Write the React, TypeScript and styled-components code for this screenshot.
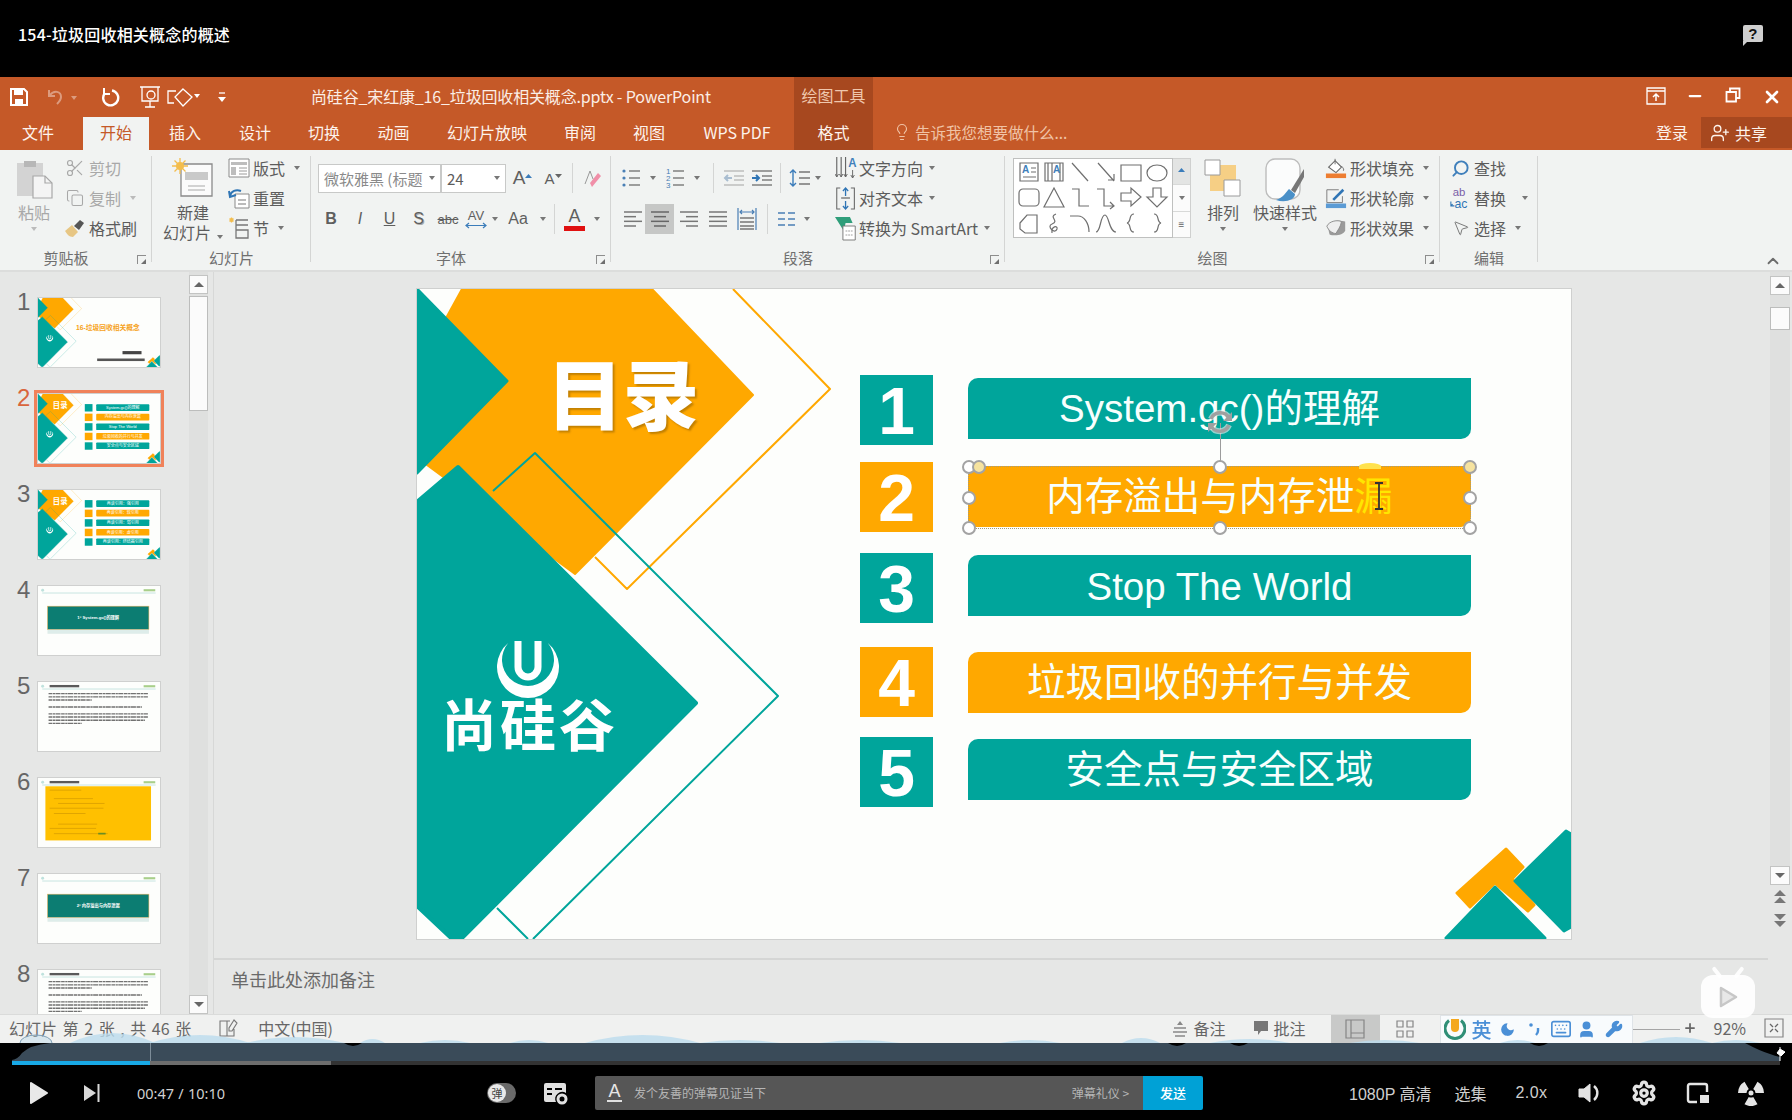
import React from 'react';
import styled, { createGlobalStyle } from 'styled-components';
import {
  ChevronUp, Copy, Keyboard, Lightbulb, Minus, Moon, MousePointer2, Plus, Scissors, Search,
  Settings, User, UserPlus, Wrench, X,
} from 'lucide-react';

const UI_FONT = '"Noto Sans CJK SC", "Noto Sans", sans-serif';
const SLIDE_FONT = '"Liberation Sans", "Noto Sans CJK SC", sans-serif';
const TEAL = '#00a59b';
const AMBER = '#ffa800';
const RUST = '#c55928';
const RUST_DARK = '#a7481f';
const INK = '#5c5c5c';
const FADED = '#a8a8a8';

const GlobalStyle = createGlobalStyle`
  html, body { margin: 0; padding: 0; background: #000; }
  * { box-sizing: border-box; }
`;

/* ---------- drawings ---------- */

const Caret = styled.span<{ $color?: string; $ml?: number }>`
  display: inline-block;
  width: 0;
  height: 0;
  margin-left: ${({ $ml }) => $ml ?? 6}px;
  border-left: 3.5px solid transparent;
  border-right: 3.5px solid transparent;
  border-top: 4px solid ${({ $color }) => $color || '#777'};
`;

const Ico = ({ w = 22, h = 22, children }: { w?: number; h?: number; children: React.ReactNode }) => (
  <svg width={w} height={h} viewBox={`0 0 ${w} ${h}`} fill="none" style={{ display: 'block' }}>
    {children}
  </svg>
);

const LinesIcon = ({ rows, color = '#777' }: { rows: number[][]; color?: string }) => (
  <Ico w={20} h={20}>
    {rows.map(([x1, x2], i) => (
      <path key={i} d={`M${x1} ${3 + i * (14 / (rows.length - 1))}H${x2}`} stroke={color} strokeWidth="1.5" />
    ))}
  </Ico>
);

const ListIcon = ({ numbered }: { numbered?: boolean }) => (
  <Ico w={20} h={20}>
    {[3, 10, 17].map((y, i) => (
      <g key={y}>
        {numbered ? (
          <text x="1" y={y + 3} fontSize="8" fontFamily="Liberation Sans" fill="#4a7fb5">{i + 1}</text>
        ) : (
          <circle cx="3" cy={y} r="1.6" fill="#4a7fb5" />
        )}
        <path d={`M8 ${y}H19`} stroke="#777" strokeWidth="1.4" />
      </g>
    ))}
  </Ico>
);

const IndentIcon = ({ faded }: { faded?: boolean }) => (
  <Ico w={24} h={20}>
    {[3, 8, 12, 17].map((y) => (
      <path key={y} d={`M${y === 3 || y === 17 ? 2 : 12} ${y}H22`} stroke={faded ? '#b9b9b9' : '#777'} strokeWidth="1.4" />
    ))}
    <path d={faded ? 'M10 10H3M6 7l-3 3 3 3' : 'M2 10H9M6 7l3 3-3 3'} stroke={faded ? '#a9bdd0' : '#2f75b5'} strokeWidth="2" />
  </Ico>
);

const LineSpacingIcon = () => (
  <Ico w={24} h={22}>
    <path d="M5 3v16M2 6l3-3 3 3M2 16l3 3 3-3" stroke="#3b7cba" strokeWidth="1.4" />
    <path d="M11 5H22M11 11H22M11 17H22" stroke="#777" strokeWidth="1.4" />
  </Ico>
);

const DistributedIcon = () => (
  <Ico w={22} h={24}>
    <path d="M2 1v22M20 1v22" stroke="#4a7fb5" strokeWidth="1.2" />
    <path d="M4 5H18M6 3L4 5l2 2M16 3l2 2-2 2" stroke="#4a7fb5" strokeWidth="1.2" />
    <path d="M4 11H18M4 15H18M4 19H18M4 22H18" stroke="#777" strokeWidth="1.4" />
  </Ico>
);

const ColumnsIcon = () => (
  <Ico w={20} h={18}>
    <path d="M1 3H8M1 9H8M1 15H8M11 3H18M11 9H18M11 15H18" stroke="#4a7fb5" strokeWidth="1.5" />
  </Ico>
);

const PasteIcon = () => (
  <Ico w={38} h={42}>
    <path d="M2 5H28V38H2z" fill="#d3d3d3" />
    <path d="M9 3h12v6H9z" fill="#b7b7b7" />
    <path d="M18 18h12l7 7v15H18z" fill="#f4f4f4" stroke="#a8a8a8" strokeWidth="1.2" />
    <path d="M30 18v7h7" stroke="#a8a8a8" strokeWidth="1.2" />
  </Ico>
);

const BrushIcon = () => (
  <Ico w={22} h={20}>
    <path d="M1 13l7-6 6 7-5 5c-4 0-6-3-8-6z" fill="#e7c684" />
    <path d="M10 8l6-6 4 3-5 7z" fill="#555" />
  </Ico>
);

const NewSlideIcon = () => (
  <Ico w={42} h={40}>
    <path d="M9 6H40V38H9z" fill="#fbfbfb" stroke="#8a8a8a" strokeWidth="1.3" />
    <path d="M13 14H36V22H13z" fill="#c9c9c9" />
    <path d="M16 28H33M16 32H33" stroke="#a9a9a9" strokeWidth="1" />
    <circle cx="8" cy="8" r="4" fill="#f3bd4d" />
    <path d="M8 0v16M0 8h16M2.5 2.5l11 11M13.5 2.5l-11 11" stroke="#f3bd4d" strokeWidth="1.3" />
  </Ico>
);

const LayoutIcon = () => (
  <Ico w={22} h={22}>
    <path d="M1 2H21V20H1z" fill="#fff" stroke="#8a8a8a" />
    <path d="M3 5H19V8H3zM3 10H8V18H3z" fill="#bdbdbd" />
    <path d="M11 11H19M11 14H19M11 17H19" stroke="#9a9a9a" />
  </Ico>
);

const ResetIcon = () => (
  <Ico w={22} h={22}>
    <path d="M7 7H21V21H7z" fill="#fff" stroke="#8a8a8a" />
    <path d="M10 13H18M10 17H18" stroke="#a5a5a5" strokeWidth="1.4" />
    <path d="M2 9C3 4 8 2 13 4M1 4l1 6 6-2" stroke="#2f75b5" strokeWidth="2" />
  </Ico>
);

const SectionIcon = () => (
  <Ico w={22} h={24}>
    <path d="M8 4H20M8 4V22H20V14H8M8 9H20" stroke="#777" strokeWidth="1.3" />
    <path d="M1 4H6M3.5 1.5V6.5M1.7 2.2l3.6 3.6M5.3 2.2L1.7 5.800" stroke="#f3bd4d" strokeWidth="1.1" />
  </Ico>
);

const TextDirectionIcon = () => (
  <Ico w={24} h={26}>
    <g transform="scale(0.88 1)">
      <path d="M2 2v20M7 2v20M12 2v20" stroke="#666" strokeWidth="1.3" />
      <path d="M0 19l2 3 2-3M5 19l2 3 2-3M10 19l2 3 2-3" stroke="#666" />
      <text x="15" y="12" fontSize="13" fontWeight="700" fontFamily="Liberation Sans" fill="#3f7fbb">A</text>
      <path d="M20 15v8M18 20l2 3 2-3" stroke="#666" />
    </g>
  </Ico>
);

const AlignTextIcon = () => (
  <Ico w={24} h={26}>
    <g transform="scale(0.88 1)">
      <path d="M6 3H2V24H6M18 3H22V24H18" stroke="#666" strokeWidth="1.2" />
      <path d="M12 3v8M9 6l3-3 3 3M12 16v8M9 21l3 3 3-3" stroke="#2f75b5" strokeWidth="1.5" />
      <path d="M7 13H17" stroke="#777" strokeWidth="1.4" />
    </g>
  </Ico>
);

const SmartArtIcon = () => (
  <Ico w={24} h={26}>
    <g transform="scale(0.88 1)">
      <path d="M0 2H17L20 8H12L10 16z" fill="#2f9e7a" />
      <path d="M9 11H23V25H9z" fill="#fff" stroke="#777" />
      <path d="M12 16H20M12 20H20" stroke="#999" strokeDasharray="2 1" />
    </g>
  </Ico>
);

const FillIcon = () => (
  <Ico w={24} h={24}>
    <path d="M4 11l7-7 7 7-6 6z" fill="#fff" stroke="#666" strokeWidth="1.2" />
    <path d="M11 2v6M18 10c2 2 3 4 2 5" stroke="#666" />
    <path d="M1 18H23V23H1z" fill="#ed7d31" />
  </Ico>
);

const OutlineIcon = () => (
  <Ico w={24} h={24}>
    <path d="M2 3H15M2 3V17H19V10" stroke="#777" />
    <path d="M8 13L19 2l2 2-11 11z" fill="#2f75b5" />
    <path d="M1 18H23V23H1z" fill="#5b9bd5" />
  </Ico>
);

const EffectIcon = () => (
  <Ico w={24} h={22}>
    <path d="M3 10c3-7 13-8 19-6v10c-2 5-12 6-17 4z" fill="#9a9a9a" />
    <path d="M2 9c3-6 12-7 16-5-1 6-4 9-6 13-4 0-8-3-10-8z" fill="#eee" stroke="#888" />
  </Ico>
);

const ReplaceIcon = () => (
  <Ico w={24} h={26}>
    <text x="3" y="11" fontSize="13" fontFamily="Liberation Sans" fill="#7a5ea8">ab</text>
    <text x="5" y="24" fontSize="14" fontFamily="Liberation Sans" fill="#2f75b5">ac</text>
    <path d="M1 17v5h4M3 20l-2 2" stroke="#2f75b5" strokeWidth="1.2" />
  </Ico>
);

const ArrangeIcon = () => (
  <Ico w={38} h={40}>
    <path d="M6 7H32V33H6z" fill="#f6cf85" />
    <path d="M1 2H16V17H1z" fill="#fff" stroke="#9a9a9a" />
    <path d="M20 22H36V38H20z" fill="#fff" stroke="#9a9a9a" />
  </Ico>
);

const QuickStyleIcon = () => (
  <Ico w={40} h={46}>
    <rect x="1" y="1" width="34" height="40" rx="9" fill="#fbfcfc" stroke="#bdbdbd" strokeWidth="1.4" />
    <path d="M39 11L26 32l4 3 9-16z" fill="#777" />
    <path d="M24 31c-3 3-6 9-13 11 9 3 19 0 19-6z" fill="#4a90c8" />
  </Ico>
);

const TinyTriangle = ({ down }: { down?: boolean }) => (
  <Ico w={7} h={14}>
    <path d={down ? 'M0 3H7L3.5 7z' : 'M0 7H7L3.5 3z'} fill={down ? '#666' : '#3b7cba'} />
  </Ico>
);

const sector = (angle: number) => {
  const pt = (r: number, a: number) => {
    const rad = (a * Math.PI) / 180;
    return `${(13 + r * Math.cos(rad)).toFixed(2)} ${(13 + r * Math.sin(rad)).toFixed(2)}`;
  };
  return `M${pt(4.5, angle - 30)}L${pt(13, angle - 30)}A13 13 0 0 1 ${pt(13, angle + 30)}L${pt(4.5, angle + 30)}A4.5 4.5 0 0 0 ${pt(4.5, angle - 30)}z`;
};

const PlayBadgeGlyph = styled.svg`
  width: 20px;
  height: 24px;
  display: block;
`;

const galleryShapes = [
  'M3 3H21V21H3z M14 8H19 M14 12H19 M6 17H19',
  'M3 3H21V21H3z M6 3V21 M10 3V21 M18 3V21',
  'M4 3L20 21',
  'M4 3L20 21 M14 20H20V14',
  'M2 5H22V21H2z',
  'M2 13a10 8 0 1 0 20 0a10 8 0 1 0 -20 0',
  'M6 4H18a4 4 0 0 1 4 4V17a4 4 0 0 1 -4 4H6a4 4 0 0 1 -4 -4V8a4 4 0 0 1 4 -4z',
  'M12 3L22 22H2z',
  'M4 4H11V21H21',
  'M3 4H10V21H20 M16 17L20 21L16 24',
  'M2 8H12V3L22 12L12 21V16H2z',
  'M8 3H16V12H22L12 22L2 12H8z',
  'M3 12L10 4H20V22H8L3 18z',
  'M14 3C6 6 18 10 10 13C4 15 13 24 15 18C16 14 9 15 10 22',
  'M2 5H10C16 5 21 12 21 21',
  'M2 21C7 21 6 4 11 4C15 4 15 21 22 21',
  'M15 3C9 3 13 11 8 12C13 13 9 21 15 21',
  'M9 3C15 3 11 11 16 12C11 13 15 21 9 21',
];

const MiniDecor = () => (
  <g strokeLinejoin="round">
    <path d="M316 0L413 100L210 300L178 268" fill="none" stroke={AMBER} strokeWidth="2" />
    <path d="M45 0H235L336 106L158 285L10 176L-10 100z" fill={AMBER} stroke={AMBER} strokeWidth="2" />
    <path d="M0 0L90 92L0 184z" fill={TEAL} stroke={TEAL} strokeWidth="3" />
    <path d="M0 213L41 178L279 414L46 648H33L0 617z" fill={TEAL} stroke={TEAL} strokeWidth="4" />
    <path d="M76 202L118 164L361 407L116 650M80 619L111 650" fill="none" stroke={TEAL} strokeWidth="2" />
  </g>
);

const CornerDecor = () => (
  <g strokeLinejoin="round">
    <path d="M1089 560L1106 578L1095 590L1117 616L1111 622L1078 594L1053 618L1040 604z" fill={AMBER} stroke={AMBER} strokeWidth="3" />
    <path d="M1149 542L1154 545V638L1147 642L1098 592z" fill={TEAL} stroke={TEAL} strokeWidth="3" />
    <path d="M1078 598L1029 649H1128z" fill={TEAL} stroke={TEAL} strokeWidth="3" />
  </g>
);

const ULogo = ({ cx, cy }: { cx: number; cy: number }) => (
  <g transform={`translate(${cx} ${cy})`}>
    <path d="M-19.8 -23.9A31 31 0 1 0 19.8 -23.9A26 26 0 1 1 -19.8 -23.9z" fill="#fff" />
    <path d="M-10 -26V0A10 10 0 0 0 10 0V-26" fill="none" stroke="#fff" strokeWidth="7" />
  </g>
);

/* ---------- thumbnails ---------- */

const tocColors = [TEAL, AMBER, TEAL, AMBER, TEAL];

const MiniToc = ({ title, labels }: { title: string; labels: string[] }) => (
  <>
    <MiniDecor />
    <ULogo cx={111} cy={376} />
    <text x="140" y="135" fontSize="70" fontWeight="700" fontFamily={UI_FONT} fill="#fff">{title}</text>
    {labels.map((label, i) => (
      <g key={label}>
        <rect x="443" y={95 + i * 90} width="73" height="70" fill={tocColors[i]} />
        <rect x="551" y={97 + i * 90} width="503" height="62" rx="8" fill={tocColors[i]} />
        <text x="802" y={140 + i * 90} textAnchor="middle" fontSize="38" fontFamily={SLIDE_FONT} fill="#fff">{label}</text>
      </g>
    ))}
    <CornerDecor />
  </>
);

const MiniHeader = ({ title }: { title?: string }) => (
  <>
    <rect x="40" y="62" width="1074" height="8" fill="#bfe2dd" />
    <circle cx="44" cy="40" r="14" fill="#bfe2dd" />
    <rect x="1000" y="30" width="110" height="20" fill="#a8cf8a" />
    {title && <rect x="110" y="28" width="280" height="22" fill="#5a5a5a" />}
  </>
);

const MiniParagraphs = () => (
  <>
    {[
      [110, 990], [140, 990], [170, 430], [235, 930], [300, 990], [330, 990], [360, 960], [390, 330],
    ].map(([y, w]) => (
      <line key={y} x1="100" x2={100 + w * 0.95} y1={y} y2={y} stroke="#3d3d3d" strokeWidth="13" strokeDasharray="34 5 22 4 48 6" opacity="0.72" />
    ))}
  </>
);

const MiniSection = ({ title }: { title: string }) => (
  <>
    <MiniHeader />
    <rect x="90" y="190" width="960" height="220" fill="#0c7d72" stroke="#f3b35a" strokeWidth="5" />
    <rect x="90" y="410" width="960" height="40" fill="#bfdcd8" opacity="0.5" />
    <text x="570" y="312" textAnchor="middle" fontSize="40" fontFamily={SLIDE_FONT} fontWeight="700" fill="#fff">{title}</text>
  </>
);

const thumbs: { n: number; body: React.ReactNode }[] = [
  {
    n: 1,
    body: (
      <>
        <MiniDecor />
        <ULogo cx={111} cy={376} />
        <text x="360" y="305" fontSize="64" fontWeight="700" fontFamily={SLIDE_FONT} fill="#f6a21a">16-垃圾回收相关概念</text>
        <rect x="800" y="500" width="180" height="30" fill="#444" />
        <rect x="560" y="570" width="450" height="24" fill="#555" />
        <CornerDecor />
      </>
    ),
  },
  { n: 2, body: <MiniToc title="目录" labels={['System.gc()的理解', '内存溢出与内存泄漏', 'Stop The World', '垃圾回收的并行与并发', '安全点与安全区域']} /> },
  { n: 3, body: <MiniToc title="目录" labels={['再谈引用：强引用', '再谈引用：软引用', '再谈引用：弱引用', '再谈引用：虚引用', '再谈引用：终结器引用']} /> },
  { n: 4, body: <MiniSection title="1° System.gc()的理解" /> },
  { n: 5, body: <><MiniHeader title="System.gc()的理解" /><MiniParagraphs /></> },
  {
    n: 6,
    body: (
      <>
        <MiniHeader title="System.gc()的理解" />
        <rect x="70" y="78" width="1000" height="510" fill="#ffc000" />
        {[110, 190, 235, 280, 330, 430, 470, 520].map((y, i) => (
          <rect key={y} x={110 + (i % 3) * 40} y={y} width={300 + (i % 4) * 70} height="9" fill="#dfa400" />
        ))}
        <rect x="570" y="516" width="70" height="16" fill="#6b8e23" />
      </>
    ),
  },
  { n: 7, body: <MiniSection title="2° 内存溢出与内存泄漏" /> },
  { n: 8, body: <><MiniHeader title="内存溢出（OOM）" /><MiniParagraphs /></> },
];

/* ---------- page frame ---------- */

const Page = styled.div`
  width: 1792px;
  height: 1120px;
  background: #000;
  display: flex;
  flex-direction: column;
  overflow: hidden;
  font-family: ${UI_FONT};
`;

const VideoHeader = styled.header`
  height: 77px;
  flex: none;
  padding: 0 28px 10px 18px;
  display: flex;
  align-items: center;
  justify-content: space-between;
  color: #fff;
  font-size: 16px;
  font-weight: 500;
  letter-spacing: 0.2px;
`;

const HelpBubble = styled.div`
  position: relative;
  width: 20px;
  height: 17px;
  margin-right: 1px;
  background: #cfcfcf;
  border-radius: 2px;
  color: #111;
  font: 700 15px/17px "Liberation Sans", sans-serif;
  text-align: center;
  &::after {
    content: '';
    position: absolute;
    left: 0;
    bottom: -4px;
    border-top: 5px solid #cfcfcf;
    border-right: 5px solid transparent;
  }
`;

const Frame = styled.main`
  flex: 1;
  min-height: 0;
  display: flex;
  flex-direction: column;
  background: #e6e7e6;
  filter: blur(0.5px);
`;

const TitleBar = styled.div`
  height: 40px;
  flex: none;
  position: relative;
  background: ${RUST};
  display: flex;
  align-items: center;
  color: #fbeee6;
`;

const QuickTool = styled.span<{ $w: number; $muted?: boolean }>`
  width: ${({ $w }) => $w}px;
  display: flex;
  justify-content: center;
  opacity: ${({ $muted }) => ($muted ? 0.4 : 1)};
`;

const DocTitle = styled.div`
  position: absolute;
  left: 311px;
  top: 8px;
  font-size: 16px;
  line-height: 22px;
  letter-spacing: -0.16px;
  white-space: nowrap;
`;

const WindowButtons = styled.div`
  margin-left: auto;
  display: flex;
  padding-right: 1px;
`;

const WindowButton = styled.span`
  width: 38.5px;
  display: flex;
  justify-content: center;
`;

const ContextTab = styled.div`
  position: absolute;
  left: 794px;
  top: 0;
  width: 79px;
  height: 40px;
  background: ${RUST_DARK};
  color: #efc7ad;
  font-size: 16px;
  line-height: 37px;
  text-align: center;
`;

const TabBar = styled.nav`
  height: 33px;
  flex: none;
  background: ${RUST};
  display: flex;
  align-items: stretch;
  color: #fdf3ec;
  font-size: 16px;
`;

const Tab = styled.div<{ $w: number; $ml?: number; $pr?: number; $active?: boolean; $context?: boolean }>`
  width: ${({ $w }) => $w}px;
  margin-left: ${({ $ml }) => $ml || 0}px;
  flex: none;
  padding: 0 ${({ $pr }) => $pr || 0}px 3px 0;
  display: flex;
  align-items: center;
  justify-content: center;
  white-space: nowrap;
  background: ${({ $active, $context }) => ($active ? '#f1f3f2' : $context ? RUST_DARK : 'transparent')};
  color: ${({ $active }) => ($active ? RUST : 'inherit')};
`;

const TellMe = styled.div`
  margin-left: 20px;
  padding-bottom: 3px;
  display: flex;
  align-items: center;
  gap: 4px;
  color: #f0c3a6;
  font-size: 15.5px;
`;

const SignIn = styled.div`
  margin-left: auto;
  padding: 0 13px 3px 0;
  display: flex;
  align-items: center;
  color: #fdf3ec;
`;

const ShareBox = styled.div`
  width: 91px;
  margin-bottom: 2px;
  padding-left: 9px;
  background: ${RUST_DARK};
  display: flex;
  align-items: center;
  gap: 5px;
`;

/* ---------- ribbon ---------- */

const Ribbon = styled.section`
  height: 122px;
  flex: none;
  position: relative;
  display: flex;
  background: #f1f3f2;
  border-bottom: 2px solid #dcdddc;
  padding-bottom: 2px;
`;

const RibbonGroup = styled.div<{ $w: number }>`
  width: ${({ $w }) => $w}px;
  flex: none;
  position: relative;
  display: flex;
  flex-direction: column;
  &::after {
    content: '';
    position: absolute;
    right: 0;
    top: 6px;
    bottom: 6px;
    width: 1px;
    background: #d4d5d4;
  }
`;

const GroupBody = styled.div<{ $pad: number }>`
  height: 97px;
  flex: none;
  padding-left: ${({ $pad }) => $pad}px;
  display: flex;
  color: ${INK};
  font-size: 16px;
`;

const GroupLabel = styled.div<{ $offset?: boolean }>`
  flex: 1;
  padding: 0 ${({ $offset }) => ($offset ? 20 : 0)}px 3px 0;
  display: flex;
  align-items: center;
  justify-content: center;
  color: #6f6f6f;
  font-size: 15px;
`;

const Launcher = styled.span`
  position: absolute;
  right: 6px;
  bottom: 4px;
  width: 9px;
  height: 9px;
  border-left: 1px solid #8d8d8d;
  border-top: 1px solid #8d8d8d;
  &::after {
    content: '';
    position: absolute;
    right: 0;
    bottom: 0;
    border-bottom: 5px solid #6f6f6f;
    border-left: 5px solid transparent;
  }
`;

const LargeCommand = styled.div<{ $w: number; $ml?: number; $muted?: boolean }>`
  width: ${({ $w }) => $w}px;
  margin-left: ${({ $ml }) => $ml || 0}px;
  flex: none;
  display: flex;
  flex-direction: column;
  align-items: center;
  color: ${({ $muted }) => ($muted ? FADED : INK)};
  line-height: 20px;
  white-space: nowrap;
`;

const LargeIcon = styled.div`
  height: 52px;
  padding-top: 8px;
  display: flex;
  align-items: flex-start;
`;

const CommandColumn = styled.div<{ $ml?: number }>`
  margin-left: ${({ $ml }) => $ml || 0}px;
  padding-top: 3px;
  flex: none;
  display: flex;
  flex-direction: column;
`;

const SmallCommand = styled.div<{ $gap?: number; $muted?: boolean }>`
  height: 30px;
  display: flex;
  align-items: center;
  gap: ${({ $gap }) => $gap ?? 3}px;
  white-space: nowrap;
  color: ${({ $muted }) => ($muted ? FADED : INK)};
`;

const CommandIcon = styled.span<{ $w: number }>`
  width: ${({ $w }) => $w}px;
  flex: none;
  display: flex;
  justify-content: center;
`;

const MirroredIcon = styled.span`
  display: flex;
  transform: scaleX(-1);
`;

const CaretLine = styled.div`
  height: 14px;
  display: flex;
  align-items: center;
  justify-content: center;
  & > span { margin-left: 0; }
`;

const ToolRows = styled.div<{ $w: number }>`
  width: ${({ $w }) => $w}px;
  flex: none;
  padding-top: 13px;
  display: flex;
  flex-direction: column;
  gap: 11px;
`;

const ToolRow = styled.div`
  height: 30px;
  display: flex;
  align-items: center;
`;

const ToolCell = styled.span<{ $w: number; $on?: boolean }>`
  width: ${({ $w }) => $w}px;
  height: 30px;
  flex: none;
  display: flex;
  align-items: center;
  justify-content: center;
  background: ${({ $on }) => ($on ? '#c6c7c6' : 'transparent')};
  & > span:only-child { margin-left: 0; }
`;

const ToolSeparator = styled.span`
  width: 1px;
  height: 30px;
  flex: none;
  margin: 0 5px;
  background: #d4d5d4;
`;

const Combo = styled.div<{ $w: number; $faint?: boolean }>`
  width: ${({ $w }) => $w}px;
  height: 29px;
  flex: none;
  padding: 0 5px;
  display: flex;
  align-items: center;
  justify-content: space-between;
  background: #fff;
  border: 1px solid #c8c9c8;
  color: ${({ $faint }) => ($faint ? '#8a8a8a' : INK)};
  font-size: 15px;
  white-space: nowrap;
  & > span { flex: none; }
`;

const FontGlyph = styled.span<{
  $bold?: boolean; $italic?: boolean; $under?: boolean; $strike?: boolean; $shadow?: boolean; $size?: number;
}>`
  font-family: "Liberation Sans", sans-serif;
  font-size: ${({ $size }) => $size || 16}px;
  font-weight: ${({ $bold }) => ($bold ? 700 : 400)};
  font-style: ${({ $italic }) => ($italic ? 'italic' : 'normal')};
  text-decoration: ${({ $under, $strike }) => ($under ? 'underline' : $strike ? 'line-through' : 'none')};
  text-shadow: ${({ $shadow }) => ($shadow ? '1px 1px 0 #aaa' : 'none')};
  color: #5f5f5f;
`;

const FontColorGlyph = styled.span`
  display: flex;
  flex-direction: column;
  align-items: center;
  font: 400 18px/17px "Liberation Sans", sans-serif;
  color: #5f5f5f;
  &::after {
    content: '';
    width: 21px;
    height: 5px;
    margin-top: 1px;
    background: #e01010;
  }
`;

const StackGlyph = styled.span`
  display: flex;
  flex-direction: column;
  align-items: center;
  font: 400 13px/13px "Liberation Sans", sans-serif;
  color: #5f5f5f;
  svg { display: block; }
`;

const Gallery = styled.div`
  width: 160px;
  height: 80px;
  margin-top: 8px;
  flex: none;
  padding: 1px 2px;
  display: grid;
  grid-template-columns: repeat(6, 1fr);
  grid-template-rows: repeat(3, 1fr);
  align-items: center;
  justify-items: center;
  background: #fff;
  border: 1px solid #bfc0bf;
`;

const GalleryLetter = styled.text`
  font: 700 10px "Liberation Sans", sans-serif;
  fill: #3f7fbb;
`;

const GallerySpinner = styled.div`
  width: 18px;
  height: 80px;
  margin-top: 8px;
  flex: none;
  display: flex;
  flex-direction: column;
  border: 1px solid #cfd0cf;
  border-left: 0;
  background: #fbfbfb;
`;

const SpinnerCell = styled.span<{ $shaded?: boolean }>`
  flex: 1;
  display: flex;
  align-items: center;
  justify-content: center;
  background: ${({ $shaded }) => ($shaded ? '#e3e4e3' : 'transparent')};
  & + & { border-top: 1px solid #d8d9d8; }
  & > span { margin-left: 0; }
`;

const RibbonCollapse = styled.span`
  position: absolute;
  right: 10px;
  bottom: 0;
  color: #6c6c6c;
  display: flex;
`;

/* ---------- workspace ---------- */

const Workspace = styled.div`
  flex: 1;
  min-height: 0;
  display: flex;
`;

const ThumbPane = styled.aside`
  width: 214px;
  flex: none;
  display: flex;
  overflow: hidden;
  border-right: 1px solid #d7d8d7;
`;

const ThumbList = styled.div`
  width: 189px;
  flex: none;
  padding-top: 25px;
  display: flex;
  flex-direction: column;
  gap: 25px;
`;

const ThumbRow = styled.div`
  height: 71px;
  flex: none;
  display: flex;
  align-items: flex-start;
`;

const ThumbNumber = styled.span<{ $current?: boolean }>`
  width: 37px;
  margin-top: -8px;
  flex: none;
  padding-left: 17px;
  font: 400 24px/26px "Liberation Sans", sans-serif;
  color: ${({ $current }) => ($current ? '#d9653c' : '#666')};
`;

const ThumbCard = styled.div<{ $current?: boolean }>`
  width: 124px;
  height: 71px;
  flex: none;
  background: #fdfefc;
  border: 1px solid #cfd0cf;
  outline: ${({ $current }) => ($current ? '3px solid #f0825a' : 'none')};
  outline-offset: 0;
  svg { display: block; width: 100%; height: 100%; }
`;

const ScrollRail = styled.div<{ $w: number; $mx?: number }>`
  width: ${({ $w }) => $w}px;
  margin: 0 ${({ $mx }) => $mx || 0}px;
  flex: none;
  position: relative;
  display: flex;
  flex-direction: column;
  background: #dfe0df;
`;

const ScrollButton = styled.div<{ $up?: boolean; $top?: number }>`
  height: 19px;
  flex: none;
  margin-top: ${({ $top }) => $top || 0}px;
  display: flex;
  align-items: center;
  justify-content: center;
  background: #fbfbfb;
  border: 1px solid #c3c4c3;
  &::before {
    content: '';
    border-left: 5px solid transparent;
    border-right: 5px solid transparent;
    ${({ $up }) => ($up ? 'border-bottom: 5px solid #666;' : 'border-top: 5px solid #666;')}
  }
`;

const ScrollThumb = styled.div<{ $h: number; $top: number }>`
  height: ${({ $h }) => $h}px;
  margin-top: ${({ $top }) => $top}px;
  flex: none;
  background: #fbfbfb;
  border: 1px solid #bcbdbc;
`;

const RailSpacer = styled.div`
  flex: 1;
`;

const Stage = styled.div`
  flex: 1;
  min-width: 0;
  display: flex;
  flex-direction: column;
  position: relative;
`;

const SlideArea = styled.div`
  height: 688px;
  flex: none;
  padding: 17px 0 0 203px;
  border-bottom: 2px solid #d5d6d5;
`;

const Slide = styled.article`
  width: 1154px;
  height: 650px;
  position: relative;
  overflow: hidden;
  padding: 86px 0 0 443px;
  background: #fdfefc;
  outline: 1px solid #cfd0cf;
  font-family: ${SLIDE_FONT};
`;

const SlideArt = styled.svg`
  position: absolute;
  left: 0;
  top: 0;
  width: 100%;
  height: 100%;
`;

const SlideHeading = styled.div`
  position: absolute;
  left: 130px;
  top: 58px;
  color: #fff;
  font: 900 76px/88px ${UI_FONT};
  text-shadow: 2px 2px 2px rgba(120, 80, 0, 0.45);
`;

const BrandName = styled.div`
  position: absolute;
  left: 24px;
  top: 400px;
  color: #fff;
  font: 700 56px/66px ${UI_FONT};
  letter-spacing: 3px;
  white-space: nowrap;
`;

const TocRow = styled.div<{ $top: number }>`
  position: relative;
  margin-top: ${({ $top }) => $top}px;
  height: 70px;
  display: flex;
  align-items: flex-start;
  gap: 35px;
`;

const TocNumber = styled.div<{ $color: string }>`
  width: 73px;
  height: 70px;
  flex: none;
  padding-top: 2px;
  display: flex;
  align-items: center;
  justify-content: center;
  background: ${({ $color }) => $color};
  color: #fff;
  font-size: 66px;
  font-weight: 700;
`;

const TocBar = styled.div<{ $color: string; $offset: number; $cjk?: boolean }>`
  position: relative;
  width: 503px;
  height: 61px;
  margin-top: ${({ $offset }) => $offset}px;
  flex: none;
  padding: ${({ $cjk }) => ($cjk ? '0 0 7px' : '3px 0 0')};
  display: flex;
  align-items: center;
  justify-content: center;
  background: ${({ $color }) => $color};
  border-radius: 10px 0 10px 0;
  color: #f7fffd;
  font-size: 38.5px;
`;

const TypedChar = styled.span`
  color: #ffe600;
`;

const SelectionBox = styled.div`
  position: absolute;
  inset: 0 0 -2px 0;
  border: 1px dotted #a09a80;
`;

const Handle = styled.i<{ $x: string; $y: string; $tint?: boolean }>`
  position: absolute;
  left: ${({ $x }) => $x};
  top: ${({ $y }) => $y};
  width: 14px;
  height: 14px;
  margin: -7px 0 0 -7px;
  border-radius: 50%;
  border: 2px solid #a3a3a3;
  background: ${({ $tint }) => ($tint ? '#f6e39f' : '#fff')};
`;

const RotateStem = styled.i`
  position: absolute;
  left: 50%;
  top: -44px;
  width: 1px;
  height: 44px;
  background: #9c9c9c;
`;

const RotateHandle = styled.svg`
  position: absolute;
  left: calc(50% - 15px);
  top: -60px;
  width: 30px;
  height: 30px;
`;

const TextCursor = styled.svg`
  position: absolute;
  left: 404px;
  top: 14px;
  width: 12px;
  height: 30px;
`;

const TypingGlow = styled.i`
  position: absolute;
  left: 390px;
  top: -4px;
  width: 22px;
  height: 6px;
  border-radius: 50% 50% 0 0;
  background: #ffe24d;
`;

const NotesPane = styled.div`
  flex: 1;
  padding: 6px 0 0 17px;
  color: #6a6a6a;
  font-size: 18px;
  line-height: 26px;
`;

const PlayBadge = styled.div`
  position: absolute;
  right: 13px;
  bottom: -4px;
  width: 54px;
  height: 43px;
  display: flex;
  align-items: center;
  justify-content: center;
  border-radius: 12px;
  background: rgba(255, 255, 255, 0.92);
  &::before, &::after {
    content: '';
    position: absolute;
    top: -9px;
    width: 4px;
    height: 13px;
    border-radius: 2px;
    background: rgba(255, 255, 255, 0.92);
  }
  &::before { left: 14px; transform: rotate(-38deg); }
  &::after { right: 14px; transform: rotate(38deg); }
`;

const StepArrows = styled.div`
  height: 129px;
  flex: none;
  padding-top: 4px;
  display: flex;
  flex-direction: column;
  align-items: center;
  gap: 7px;
  background: #e6e7e6;
`;

/* ---------- status bar ---------- */

const StatusBar = styled.footer`
  height: 29px;
  flex: none;
  padding: 0 8px 0 9px;
  display: flex;
  align-items: center;
  background: #f0f1f0;
  border-top: 1px solid #dadbda;
  color: #666;
  font-size: 16px;
  white-space: nowrap;
`;

const StatusItem = styled.span<{ $ml?: number; $gap?: number; $push?: boolean; $spaced?: boolean }>`
  margin-left: ${({ $ml, $push }) => ($push ? 'auto' : `${$ml || 0}px`)};
  padding-bottom: 3px;
  display: flex;
  align-items: center;
  gap: ${({ $gap }) => $gap || 0}px;
  word-spacing: ${({ $spaced }) => ($spaced ? 2 : 0)}px;
`;

const ViewButton = styled.span<{ $w: number; $on?: boolean; $ml?: number }>`
  width: ${({ $w }) => $w}px;
  height: 28px;
  margin-left: ${({ $ml }) => $ml || 0}px;
  flex: none;
  display: flex;
  align-items: center;
  justify-content: center;
  background: ${({ $on }) => ($on ? '#c8c9c8' : 'transparent')};
`;

const ImeBar = styled.div`
  position: relative;
  z-index: 2;
  width: 193px;
  height: 29px;
  margin-left: 9px;
  flex: none;
  padding-left: 3px;
  display: flex;
  align-items: center;
  background: #f8fbfd;
  border: 1px solid #dfe4e8;
  color: #4a8fd6;
  font-size: 20px;
  font-weight: 500;
`;

const ImeSlot = styled.span<{ $w: number }>`
  width: ${({ $w }) => $w}px;
  flex: none;
  display: flex;
  justify-content: center;
`;

const ZoomTrack = styled.span`
  width: 47px;
  height: 1px;
  flex: none;
  background: #a5a5a5;
`;

/* ---------- player ---------- */

const Player = styled.section`
  height: 77px;
  flex: none;
  position: relative;
  background: #000;
`;

const WaveOverlay = styled.svg`
  position: absolute;
  left: 0;
  top: -14px;
  width: 1792px;
  height: 36px;
  pointer-events: none;
  z-index: 3;
`;

const Waveform = styled.div`
  height: 18px;
  margin: 0 12px;
  background: #3a4b59;
  position: relative;
`;

const Playhead = styled.i`
  position: absolute;
  left: 138px;
  top: 0;
  bottom: 0;
  width: 1px;
  background: #7d8d99;
`;

const ProgressTrack = styled.div`
  height: 4px;
  margin: 0 12px;
  display: flex;
  background: #333;
`;

const ProgressFill = styled.span<{ $w: number; $color: string }>`
  width: ${({ $w }) => $w}px;
  flex: none;
  background: ${({ $color }) => $color};
`;

const Controls = styled.div`
  height: 55px;
  padding: 0 0 0 29px;
  display: flex;
  align-items: center;
  color: #cfcfcf;
  font: 400 16px ${SLIDE_FONT};
  white-space: nowrap;
`;

const PlayerSlot = styled.span<{ $ml?: number; $spaced?: boolean }>`
  margin-left: ${({ $ml }) => $ml || 0}px;
  flex: none;
  display: flex;
  align-items: center;
  letter-spacing: ${({ $spaced }) => ($spaced ? 0.4 : 0)}px;
`;

const TimeLabel = styled.span`
  font: 400 14.5px/20px "Noto Sans", sans-serif;
  color: #d0d0d0;
  word-spacing: 0.5px;
`;

const DanmakuToggle = styled.span`
  position: relative;
  width: 29px;
  height: 20px;
  display: flex;
  align-items: center;
  border-radius: 10px;
  background: #6a6a6a;
`;

const DanmakuKnob = styled.i`
  width: 18px;
  height: 18px;
  margin-left: 1px;
  border-radius: 50%;
  background: #e9e9e9;
  color: #444;
  font: 400 11px/18px ${UI_FONT};
  text-align: center;
`;

const DanmakuBox = styled.div`
  width: 548px;
  height: 34px;
  padding: 0 14px 0 12px;
  display: flex;
  align-items: center;
  background: #565656;
  border-radius: 2px 0 0 2px;
  color: #b5b5b5;
  font: 400 12px ${UI_FONT};
`;

const FontBadge = styled.span`
  width: 15px;
  margin-right: 12px;
  border-bottom: 2px solid #e0e0e0;
  color: #e6e6e6;
  font: 400 18px/17px "Liberation Sans", sans-serif;
  text-align: center;
`;

const DanmakuEtiquette = styled.span`
  margin-left: auto;
`;

const SendButton = styled.button`
  width: 60px;
  height: 34px;
  flex: none;
  padding: 0;
  border: 0;
  border-radius: 0 2px 2px 0;
  background: #00a1d6;
  color: #fff;
  font: 500 13px ${UI_FONT};
`;

const ribbonTabs = [
  { label: '开始', w: 66, active: true },
  { label: '插入', w: 72 },
  { label: '设计', w: 68 },
  { label: '切换', w: 70 },
  { label: '动画', w: 69 },
  { label: '幻灯片放映', w: 118 },
  { label: '审阅', w: 68 },
  { label: '视图', w: 70 },
  { label: 'WPS PDF', w: 106 },
];

const tocRows = [
  { n: 1, label: 'System.gc()的理解', color: TEAL, top: 0, offset: 3, cjk: true },
  { n: 2, label: '内存溢出与内存泄', color: AMBER, top: 17, offset: 4, cjk: true, selected: true },
  { n: 3, label: 'Stop The World', color: TEAL, top: 21, offset: 2 },
  { n: 4, label: '垃圾回收的并行与并发', color: AMBER, top: 24, offset: 5, cjk: true },
  { n: 5, label: '安全点与安全区域', color: TEAL, top: 20, offset: 2, cjk: true },
];

const handles = [
  { x: '0%', y: '0%' },
  { x: '2%', y: '0%', tint: true },
  { x: '50%', y: '0%' },
  { x: '100%', y: '0%', tint: true },
  { x: '0%', y: '50%' },
  { x: '100%', y: '50%' },
  { x: '0%', y: '100%' },
  { x: '50%', y: '100%' },
  { x: '100%', y: '100%' },
];

const waveBumps = [
  [70, 155, 10], [150, 250, 8], [245, 345, 6], [360, 385, 4], [420, 470, 3], [510, 548, 3],
  [585, 700, 8], [700, 780, 3], [820, 900, 3], [1000, 1060, 3], [1122, 1160, 5], [1210, 1290, 4],
  [1350, 1420, 3], [1500, 1535, 3], [1640, 1712, 6], [1712, 1760, 3],
];

const waveNotches = [353, 1177, 1239, 1539];

const App = () => (
  <>
    <GlobalStyle />
    <Page>
      <VideoHeader>
        <span>154-垃圾回收相关概念的概述</span>
        <HelpBubble>?</HelpBubble>
      </VideoHeader>

      <Frame>
        <TitleBar>
          <QuickTool $w={38}>
            <Ico w={20} h={20}>
              <path d="M2 2H15L18 5V18H2z" stroke="#fff" strokeWidth="2" />
              <path d="M5 3H14V8H5zM6 12H14V18H6z" fill="#fff" />
            </Ico>
          </QuickTool>
          <QuickTool $w={48} $muted>
            <Ico w={34} h={20}>
              <path d="M5 8C9 3 16 4 16 10c0 3-2 5-4 7M4 3v6h6" stroke="#fff" strokeWidth="2" />
              <path d="M26 9h6l-3 4z" fill="#fff" />
            </Ico>
          </QuickTool>
          <QuickTool $w={48}>
            <Ico w={20} h={20}>
              <path d="M12 3.5A7.5 7.5 0 1 1 5 6" stroke="#fff" strokeWidth="2.4" />
              <path d="M4 1V7H10" stroke="#fff" strokeWidth="2" />
            </Ico>
          </QuickTool>
          <QuickTool $w={32}>
            <Ico w={22} h={24}>
              <path d="M1 2H21M3 2V16H19V2M11 16V22M6 22H16" stroke="#fff" strokeWidth="1.3" />
              <circle cx="12" cy="10" r="4" stroke="#fff" strokeWidth="1.3" />
            </Ico>
          </QuickTool>
          <QuickTool $w={34}>
            <Ico w={34} h={22}>
              <path d="M10 5H2V17H8M17 3L26 11L17 20L9 11z" stroke="#fff" strokeWidth="1.3" />
              <path d="M28 8h6l-3 4z" fill="#fff" />
            </Ico>
          </QuickTool>
          <QuickTool $w={44}>
            <Ico w={12} h={12}>
              <path d="M3 2H9" stroke="#fff" strokeWidth="1.3" />
              <path d="M2 6H10L6 11z" fill="#fff" />
            </Ico>
          </QuickTool>
          <DocTitle>尚硅谷_宋红康_16_垃圾回收相关概念.pptx - PowerPoint</DocTitle>
          <ContextTab>绘图工具</ContextTab>
          <WindowButtons>
            <WindowButton>
              <Ico w={20} h={18}>
                <path d="M1 1H19V17H1zM1 4H19" stroke="#fff" strokeWidth="1.3" />
                <path d="M10 14V7M7 10l3-3 3 3" stroke="#fff" strokeWidth="1.5" />
              </Ico>
            </WindowButton>
            <WindowButton><Minus size={18} color="#fff" strokeWidth={3} /></WindowButton>
            <WindowButton>
              <Ico w={16} h={16}>
                <path d="M1.5 5H11V14.5H1.5zM5 5V1.5H14.5V11H11" stroke="#fff" strokeWidth="1.8" />
              </Ico>
            </WindowButton>
            <WindowButton><X size={20} color="#fff" strokeWidth={3.2} /></WindowButton>
          </WindowButtons>
        </TitleBar>

        <TabBar>
          <Tab $w={83} $pr={7}>文件</Tab>
          {ribbonTabs.map((t) => (
            <Tab key={t.label} $w={t.w} $active={t.active}>{t.label}</Tab>
          ))}
          <Tab $w={79} $ml={4} $context>格式</Tab>
          <TellMe>
            <Lightbulb size={18} strokeWidth={1.5} />
            告诉我您想要做什么...
          </TellMe>
          <SignIn>登录</SignIn>
          <ShareBox>
            <UserPlus size={20} strokeWidth={1.6} />
            共享
          </ShareBox>
        </TabBar>

        <Ribbon>
          <RibbonGroup $w={152}>
            <GroupBody $pad={14}>
              <LargeCommand $w={40} $muted>
                <LargeIcon><PasteIcon /></LargeIcon>
                粘贴
                <CaretLine><Caret $color="#bbb" /></CaretLine>
              </LargeCommand>
              <CommandColumn $ml={10}>
                <SmallCommand $muted>
                  <CommandIcon $w={22}><Scissors size={20} color={FADED} strokeWidth={1.4} /></CommandIcon>
                  剪切
                </SmallCommand>
                <SmallCommand $muted>
                  <CommandIcon $w={22}><Copy size={18} color={FADED} strokeWidth={1.4} /></CommandIcon>
                  复制<Caret $color="#bbb" />
                </SmallCommand>
                <SmallCommand>
                  <CommandIcon $w={22}><BrushIcon /></CommandIcon>
                  格式刷
                </SmallCommand>
              </CommandColumn>
            </GroupBody>
            <GroupLabel $offset>剪贴板</GroupLabel>
            <Launcher />
          </RibbonGroup>

          <RibbonGroup $w={159}>
            <GroupBody $pad={8}>
              <LargeCommand $w={66}>
                <LargeIcon><NewSlideIcon /></LargeIcon>
                新建
                <span>幻灯片<Caret /></span>
              </LargeCommand>
              <CommandColumn $ml={2}>
                <SmallCommand>
                  <CommandIcon $w={22}><LayoutIcon /></CommandIcon>
                  版式<Caret />
                </SmallCommand>
                <SmallCommand>
                  <CommandIcon $w={22}><ResetIcon /></CommandIcon>
                  重置
                </SmallCommand>
                <SmallCommand>
                  <CommandIcon $w={22}><SectionIcon /></CommandIcon>
                  节<Caret />
                </SmallCommand>
              </CommandColumn>
            </GroupBody>
            <GroupLabel>幻灯片</GroupLabel>
          </RibbonGroup>

          <RibbonGroup $w={300}>
            <GroupBody $pad={7}>
              <ToolRows $w={290}>
                <ToolRow>
                  <Combo $w={123} $faint>微软雅黑 (标题<Caret /></Combo>
                  <Combo $w={65}>24<Caret /></Combo>
                  <ToolCell $w={33}><FontGlyph $size={19}>A</FontGlyph><TinyTriangle /></ToolCell>
                  <ToolCell $w={28}><FontGlyph $size={15}>A</FontGlyph><TinyTriangle down /></ToolCell>
                  <ToolSeparator />
                  <ToolCell $w={24}>
                    <Ico w={22} h={22}>
                      <path d="M11 16L19 6l3 3-9 11z" fill="#f08fa8" />
                      <path d="M6 17l5-13 3 8" stroke="#999" />
                    </Ico>
                  </ToolCell>
                </ToolRow>
                <ToolRow>
                  <ToolCell $w={26}><FontGlyph $bold>B</FontGlyph></ToolCell>
                  <ToolCell $w={32}><FontGlyph $italic>I</FontGlyph></ToolCell>
                  <ToolCell $w={27}><FontGlyph $under>U</FontGlyph></ToolCell>
                  <ToolCell $w={31}><FontGlyph $shadow>S</FontGlyph></ToolCell>
                  <ToolCell $w={28}><FontGlyph $size={13} $strike>abc</FontGlyph></ToolCell>
                  <ToolCell $w={28}>
                    <StackGlyph>
                      AV
                      <Ico w={22} h={7}>
                        <path d="M1 3.5H21M4 1L1 3.5 4 6M18 1l3 2.5L18 6" stroke="#3b7cba" strokeWidth="1.2" />
                      </Ico>
                    </StackGlyph>
                  </ToolCell>
                  <ToolCell $w={10}><Caret /></ToolCell>
                  <ToolCell $w={36}><FontGlyph>Aa</FontGlyph></ToolCell>
                  <ToolCell $w={13}><Caret /></ToolCell>
                  <ToolSeparator />
                  <ToolCell $w={29}><FontColorGlyph>A</FontColorGlyph></ToolCell>
                  <ToolCell $w={16}><Caret /></ToolCell>
                </ToolRow>
              </ToolRows>
            </GroupBody>
            <GroupLabel $offset>字体</GroupLabel>
            <Launcher />
          </RibbonGroup>

          <RibbonGroup $w={394}>
            <GroupBody $pad={9}>
              <ToolRows $w={215}>
                <ToolRow>
                  <ToolCell $w={22}><ListIcon /></ToolCell>
                  <ToolCell $w={22}><Caret /></ToolCell>
                  <ToolCell $w={22}><ListIcon numbered /></ToolCell>
                  <ToolCell $w={22}><Caret /></ToolCell>
                  <ToolSeparator />
                  <ToolCell $w={29}><IndentIcon faded /></ToolCell>
                  <ToolCell $w={27}><IndentIcon /></ToolCell>
                  <ToolSeparator />
                  <ToolCell $w={28}><LineSpacingIcon /></ToolCell>
                  <ToolCell $w={8}><Caret /></ToolCell>
                </ToolRow>
                <ToolRow>
                  <ToolCell $w={25}><LinesIcon rows={[[1, 19], [1, 13], [1, 19], [1, 13]]} /></ToolCell>
                  <ToolCell $w={29} $on><LinesIcon rows={[[1, 19], [4, 16], [1, 19], [4, 16]]} color="#666" /></ToolCell>
                  <ToolCell $w={29}><LinesIcon rows={[[1, 19], [7, 19], [1, 19], [7, 19]]} /></ToolCell>
                  <ToolCell $w={29}><LinesIcon rows={[[1, 19], [1, 19], [1, 19], [1, 19]]} /></ToolCell>
                  <ToolCell $w={30}><DistributedIcon /></ToolCell>
                  <ToolSeparator />
                  <ToolCell $w={28}><ColumnsIcon /></ToolCell>
                  <ToolCell $w={12}><Caret /></ToolCell>
                </ToolRow>
              </ToolRows>
              <CommandColumn>
                <SmallCommand $gap={0}>
                  <CommandIcon $w={24}><TextDirectionIcon /></CommandIcon>
                  文字方向<Caret />
                </SmallCommand>
                <SmallCommand $gap={0}>
                  <CommandIcon $w={24}><AlignTextIcon /></CommandIcon>
                  对齐文本<Caret />
                </SmallCommand>
                <SmallCommand $gap={0}>
                  <CommandIcon $w={24}><SmartArtIcon /></CommandIcon>
                  转换为 SmartArt<Caret />
                </SmallCommand>
              </CommandColumn>
            </GroupBody>
            <GroupLabel $offset>段落</GroupLabel>
            <Launcher />
          </RibbonGroup>

          <RibbonGroup $w={435}>
            <GroupBody $pad={8}>
              <Gallery>
                {galleryShapes.map((d, i) => (
                  <Ico key={d} w={24} h={25}>
                    <path d={d} stroke="#6f6f6f" strokeWidth="1.2" />
                    {i === 0 && <GalleryLetter x="5" y="13">A</GalleryLetter>}
                    {i === 1 && <GalleryLetter x="11" y="13">A</GalleryLetter>}
                  </Ico>
                ))}
              </Gallery>
              <GallerySpinner>
                <SpinnerCell $shaded><TinyTriangle /></SpinnerCell>
                <SpinnerCell><Caret /></SpinnerCell>
                <SpinnerCell><FontGlyph $size={10}>≡</FontGlyph></SpinnerCell>
              </GallerySpinner>
              <LargeCommand $w={36} $ml={14}>
                <LargeIcon><ArrangeIcon /></LargeIcon>
                排列
                <CaretLine><Caret /></CaretLine>
              </LargeCommand>
              <LargeCommand $w={70} $ml={9}>
                <LargeIcon><QuickStyleIcon /></LargeIcon>
                快速样式
                <CaretLine><Caret /></CaretLine>
              </LargeCommand>
              <CommandColumn $ml={5}>
                <SmallCommand>
                  <CommandIcon $w={22}><FillIcon /></CommandIcon>
                  形状填充<Caret />
                </SmallCommand>
                <SmallCommand>
                  <CommandIcon $w={22}><OutlineIcon /></CommandIcon>
                  形状轮廓<Caret />
                </SmallCommand>
                <SmallCommand>
                  <CommandIcon $w={22}><EffectIcon /></CommandIcon>
                  形状效果<Caret />
                </SmallCommand>
              </CommandColumn>
            </GroupBody>
            <GroupLabel $offset>绘图</GroupLabel>
            <Launcher />
          </RibbonGroup>

          <RibbonGroup $w={98}>
            <GroupBody $pad={10}>
              <CommandColumn>
                <SmallCommand $gap={3}>
                  <CommandIcon $w={21}>
                    <MirroredIcon><Search size={19} color="#3f7fbb" strokeWidth={2.4} /></MirroredIcon>
                  </CommandIcon>
                  查找
                </SmallCommand>
                <SmallCommand $gap={3}>
                  <CommandIcon $w={21}><ReplaceIcon /></CommandIcon>
                  替换<Caret $ml={13} />
                </SmallCommand>
                <SmallCommand $gap={3}>
                  <CommandIcon $w={21}><MousePointer2 size={18} color="#777" strokeWidth={1.3} /></CommandIcon>
                  选择<Caret />
                </SmallCommand>
              </CommandColumn>
            </GroupBody>
            <GroupLabel>编辑</GroupLabel>
          </RibbonGroup>

          <RibbonCollapse><ChevronUp size={18} strokeWidth={2.4} /></RibbonCollapse>
        </Ribbon>

        <Workspace>
          <ThumbPane>
            <ThumbList>
              {thumbs.map((t) => (
                <ThumbRow key={t.n}>
                  <ThumbNumber $current={t.n === 2}>{t.n}</ThumbNumber>
                  <ThumbCard $current={t.n === 2}>
                    <svg viewBox="0 0 1155 650" preserveAspectRatio="none">{t.body}</svg>
                  </ThumbCard>
                </ThumbRow>
              ))}
            </ThumbList>
            <ScrollRail $w={19}>
              <ScrollButton $up $top={3} />
              <ScrollThumb $h={115} $top={2} />
              <RailSpacer />
              <ScrollButton />
            </ScrollRail>
          </ThumbPane>

          <Stage>
            <SlideArea>
              <Slide>
                <SlideArt viewBox="0 0 1154 650">
                  <MiniDecor />
                  <ULogo cx={111} cy={378} />
                  <CornerDecor />
                </SlideArt>
                <SlideHeading>目录</SlideHeading>
                <BrandName>尚硅谷</BrandName>
                {tocRows.map((row) => (
                  <TocRow key={row.n} $top={row.top}>
                    <TocNumber $color={row.color}>{row.n}</TocNumber>
                    <TocBar $color={row.color} $offset={row.offset} $cjk={row.cjk}>
                      {row.label}
                      {row.selected && <TypedChar>漏</TypedChar>}
                      {row.selected && (
                        <SelectionBox>
                          <TypingGlow />
                          <RotateStem />
                          <RotateHandle viewBox="0 0 30 30">
                            <path d="M24 11A10 10 0 0 0 6 12M6 19A10 10 0 0 0 24 18" fill="none" stroke="#f2f2f2" strokeWidth="6" opacity="0.6" />
                            <path d="M24 11A10 10 0 0 0 6 12M6 19A10 10 0 0 0 24 18" fill="none" stroke="#a0a0a0" strokeWidth="3.5" />
                            <path d="M27 5V14H18zM3 25V16H12z" fill="#a0a0a0" />
                          </RotateHandle>
                          {handles.map((h) => (
                            <Handle key={`${h.x}${h.y}`} $x={h.x} $y={h.y} $tint={h.tint} />
                          ))}
                          <TextCursor viewBox="0 0 12 30">
                            <path d="M2 2H10M6 2V28M2 28H10" fill="none" stroke="#333" strokeWidth="1.8" />
                          </TextCursor>
                        </SelectionBox>
                      )}
                    </TocBar>
                  </TocRow>
                ))}
              </Slide>
            </SlideArea>
            <NotesPane>单击此处添加备注</NotesPane>
            <PlayBadge>
              <PlayBadgeGlyph viewBox="0 0 20 24">
                <path d="M3 3L18 12L3 21z" fill="#e8e8e8" stroke="#c7c7c7" strokeWidth="2.5" strokeLinejoin="round" />
              </PlayBadgeGlyph>
            </PlayBadge>
          </Stage>

          <ScrollRail $w={20} $mx={2}>
            <ScrollButton $up $top={4} />
            <ScrollThumb $h={23} $top={12} />
            <RailSpacer />
            <ScrollButton />
            <StepArrows>
              <Ico w={14} h={16}>
                <path d="M7 1L13 7H1zM7 8L13 14H1z" fill="#777" />
              </Ico>
              <Ico w={14} h={16}>
                <path d="M7 15L13 9H1zM7 8L13 2H1z" fill="#777" />
              </Ico>
            </StepArrows>
          </ScrollRail>
        </Workspace>

        <StatusBar>
          <StatusItem $spaced>幻灯片 第 2 张 , 共 46 张</StatusItem>
          <StatusItem $ml={27}>
            <Ico w={22} h={20}>
              <path d="M2 3H9V18H2zM9 3h3M9 18h7V11M16 2l-5 8v3h3l5-8z" stroke="#777" strokeWidth="1.1" />
            </Ico>
          </StatusItem>
          <StatusItem $ml={18}>中文(中国)</StatusItem>
          <StatusItem $push $gap={5}>
            <Ico w={16} h={18}>
              <path d="M2 9H14M1 13H15M3 17H13" stroke="#888" strokeWidth="1.3" />
              <path d="M8 2l3 4H5z" fill="#888" />
            </Ico>
            备注
          </StatusItem>
          <StatusItem $ml={28} $gap={4}>
            <Ico w={16} h={18}>
              <path d="M1 2H15V12H8L5 16V12H1z" fill="#777" />
            </Ico>
            批注
          </StatusItem>
          <ViewButton $w={49} $ml={25} $on>
            <Ico w={20} h={20}>
              <path d="M1 1H19V19H1zM6 1V19M6 14H19" stroke="#858585" strokeWidth="1.2" />
            </Ico>
          </ViewButton>
          <ViewButton $w={51}>
            <Ico w={20} h={20}>
              <path d="M2 2H8V8H2zM12 2H18V8H12zM2 12H8V18H2zM12 12H18V18H12z" stroke="#858585" strokeWidth="1.2" />
            </Ico>
          </ViewButton>
          <ImeBar>
            <ImeSlot $w={22}>
              <Ico w={22} h={24}>
                <path d="M5 3.5A10 10 0 1 0 17 3.5" stroke="#2f8f77" strokeWidth="3" />
                <path d="M7 2V11A4 4 0 0 0 15 11V2z" fill="#f4a81f" />
              </Ico>
            </ImeSlot>
            <ImeSlot $w={32}>英</ImeSlot>
            <ImeSlot $w={20}><Moon size={17} fill="#4a8fd6" strokeWidth={0} /></ImeSlot>
            <ImeSlot $w={32}>
              <Ico w={14} h={16}>
                <circle cx="4" cy="4" r="1.8" fill="#4a8fd6" />
                <path d="M11 7v3c0 2-1 3-2 4" stroke="#4a8fd6" strokeWidth="2.4" />
              </Ico>
            </ImeSlot>
            <ImeSlot $w={22}><Keyboard size={22} color="#4a8fd6" strokeWidth={1.8} /></ImeSlot>
            <ImeSlot $w={30}><User size={19} color="#4a8fd6" fill="#4a8fd6" /></ImeSlot>
            <ImeSlot $w={24}><Wrench size={18} color="#4a8fd6" fill="#4a8fd6" /></ImeSlot>
          </ImeBar>
          <ZoomTrack />
          <StatusItem $ml={3}><Plus size={14} color="#666" strokeWidth={3} /></StatusItem>
          <StatusItem $ml={17}>92%</StatusItem>
          <StatusItem $ml={18}>
            <Ico w={20} h={20}>
              <path d="M1 1H19V19H1z" stroke="#858585" strokeWidth="1.2" />
              <path d="M6 6l3 3M14 6l-3 3M6 14l3-3M14 14l-3-3" stroke="#666" strokeWidth="1.3" />
            </Ico>
          </StatusItem>
        </StatusBar>
      </Frame>

      <Player>
        <WaveOverlay viewBox="0 0 1792 36">
          {waveBumps.map(([a, b, h]) => (
            <path key={a} d={`M${a} 14Q${(a + b) / 2} ${14 - 2 * h} ${b} 14z`} fill="#bcdcee" opacity="0.8" />
          ))}
          <path d="M20 14A16 8 0 0 1 52 14" fill="#b5d6e8" fillOpacity="0.4" stroke="#7f9fb5" />
          {waveNotches.map((x) => (
            <path key={x} d={`M${x - 9} 14Q${x} 20 ${x + 9} 14z`} fill="#000" />
          ))}
          <path d="M12 14H50Q30 16 22 24Q18 30 12 31z" fill="#000" />
          <path d="M1745 14Q1760 22 1770 25Q1775 27 1780 28V14z" fill="#000" />
          <path d="M1780 18V32M1777 24L1780 20L1785 23L1781 27z" fill="#fff" stroke="#fff" />
        </WaveOverlay>
        <Waveform><Playhead /></Waveform>
        <ProgressTrack>
          <ProgressFill $w={138} $color="#18a9e6" />
          <ProgressFill $w={181} $color="#6d6d6d" />
        </ProgressTrack>
        <Controls>
          <PlayerSlot>
            <svg width="20" height="24" viewBox="0 0 20 24">
              <path d="M2 2L18 12L2 22z" fill="#e8e8e8" stroke="#e8e8e8" strokeWidth="2" strokeLinejoin="round" />
            </svg>
          </PlayerSlot>
          <PlayerSlot $ml={35}>
            <svg width="16" height="20" viewBox="0 0 16 20">
              <path d="M0 2L12 10L0 18z" fill="#d8d8d8" />
              <path d="M14.5 1V19" stroke="#d8d8d8" strokeWidth="2" />
            </svg>
          </PlayerSlot>
          <PlayerSlot $ml={37}><TimeLabel>00:47 / 10:10</TimeLabel></PlayerSlot>
          <PlayerSlot $ml={262}>
            <DanmakuToggle><DanmakuKnob>弹</DanmakuKnob></DanmakuToggle>
          </PlayerSlot>
          <PlayerSlot $ml={27}>
            <svg width="25" height="26" viewBox="0 0 25 26">
              <path d="M3 3H21Q23 3 23 5V13A7 7 0 0 0 13 22H3Q1 22 1 20V5Q1 3 3 3z" fill="#e0e0e0" />
              <path d="M4 9H9M4 14H9M12 9H19" stroke="#000" strokeWidth="2" />
              <circle cx="19" cy="19" r="4" fill="none" stroke="#e0e0e0" strokeWidth="3" />
            </svg>
          </PlayerSlot>
          <PlayerSlot $ml={27}>
            <DanmakuBox>
              <FontBadge>A</FontBadge>
              发个友善的弹幕见证当下
              <DanmakuEtiquette>弹幕礼仪 &gt;</DanmakuEtiquette>
            </DanmakuBox>
            <SendButton>发送</SendButton>
          </PlayerSlot>
          <PlayerSlot $ml={146}>1080P 高清</PlayerSlot>
          <PlayerSlot $ml={23}>选集</PlayerSlot>
          <PlayerSlot $ml={29} $spaced>2.0x</PlayerSlot>
          <PlayerSlot $ml={31}>
            <svg width="22" height="26" viewBox="0 0 22 26">
              <path d="M1 9H6L12 4V22L6 17H1z" fill="#e4e4e4" stroke="#e4e4e4" strokeLinejoin="round" />
              <path d="M16 6A9 9 0 0 1 16 20" fill="none" stroke="#e4e4e4" strokeWidth="2.4" />
            </svg>
          </PlayerSlot>
          <PlayerSlot $ml={31}><Settings size={26} color="#e4e4e4" strokeWidth={3} /></PlayerSlot>
          <PlayerSlot $ml={29}>
            <svg width="24" height="24" viewBox="0 0 24 24">
              <path d="M11 21H4Q2 21 2 19V5Q2 3 4 3H19Q21 3 21 5V11" fill="none" stroke="#e4e4e4" strokeWidth="2.4" />
              <rect x="14" y="14" width="9" height="8" fill="#e4e4e4" />
            </svg>
          </PlayerSlot>
          <PlayerSlot $ml={28}>
            <svg width="26" height="26" viewBox="0 0 26 26">
              <circle cx="13" cy="13" r="2.5" fill="#e4e4e4" />
              {[90, 210, 330].map((a) => (
                <path key={a} d={sector(a)} fill="#e4e4e4" />
              ))}
            </svg>
          </PlayerSlot>
        </Controls>
      </Player>
    </Page>
  </>
);

export default App;
